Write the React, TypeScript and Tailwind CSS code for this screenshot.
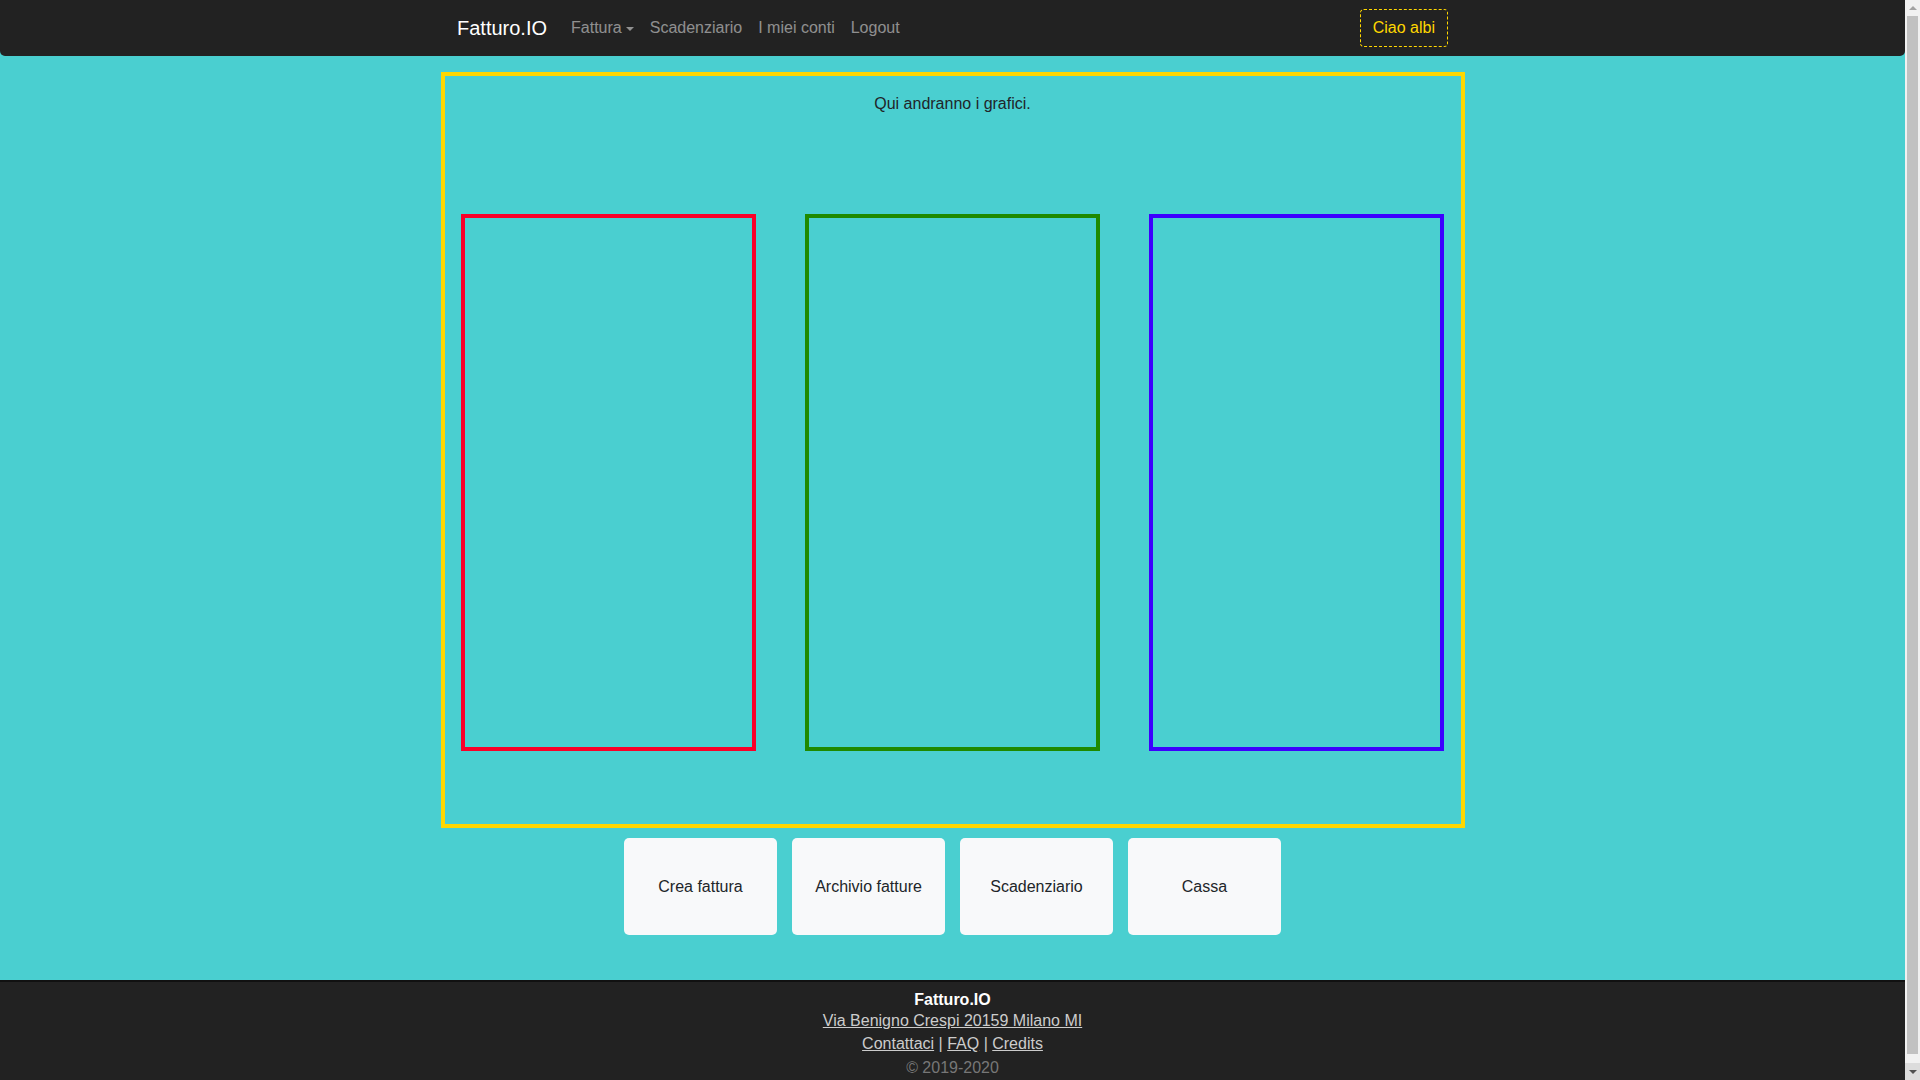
import React from 'react'

const boxes = [
  { id: 'red', className: 'border-[#fa0028]' },
  { id: 'green', className: 'border-[#1f8a00]' },
  { id: 'blue', className: 'border-[#3c00ff]' },
]

const actions = ['Crea fattura', 'Archivio fatture', 'Scadenziario', 'Cassa']

function Navbar() {
  return (
    <nav className="h-[56px] shrink-0 bg-[#222222] rounded-b-[5px] flex items-center">
      <div className="w-full flex items-center pl-[457px] pr-[457px]">
        <a className="text-[20px] leading-[30px] text-white mr-[16px]">Fatturo.IO</a>
        <ul className="flex items-center text-[16px] leading-6 text-white/50">
          <li className="px-[8px] flex items-center">
            Fattura
            <span className="inline-block w-0 h-0 ml-[4px] mt-[2px] border-t-[4.8px] border-x-[4.8px] border-x-transparent border-t-white/50" />
          </li>
          <li className="px-[8px]">Scadenziario</li>
          <li className="px-[8px]">I miei conti</li>
          <li className="px-[8px]">Logout</li>
        </ul>
        <button className="ml-auto h-[38px] px-[12px] border border-dashed border-[#ffd700] rounded-[4px] text-[#ffd700] text-[16px] leading-6">
          Ciao albi
        </button>
      </div>
    </nav>
  )
}

function Footer() {
  return (
    <footer className="mt-[45px] shrink-0 bg-[#222222] border-t-2 border-[#111111] pt-[6px] pb-4 text-center text-[16px] leading-6">
      <div className="font-bold text-white">Fatturo.IO</div>
      <div className="-mt-[3px]">
        <a className="text-[#cccccc] underline">Via Benigno Crespi 20159 Milano MI</a>
      </div>
      <div className="-mt-[1px] text-[#cccccc]">
        <a className="underline">Contattaci</a> | <a className="underline">FAQ</a> | <a className="underline">Credits</a>
      </div>
      <div className="text-[#777777]">© 2019-2020</div>
    </footer>
  )
}

// browser scrollbar, as seen in the screenshot
function Scrollbar() {
  return (
    <aside className="w-[15px] shrink-0 h-screen bg-[#f1f1f1] flex flex-col">
      <div className="h-[15px] flex items-center justify-center">
        <span className="w-0 h-0 border-b-[4px] border-x-[4px] border-x-transparent border-b-[#a3a3a3]" />
      </div>
      <div className="flex-1 px-[2px] pt-[1px] pb-[9px]">
        <div className="h-full bg-[#c1c1c1]" />
      </div>
      <div className="h-[17px] flex items-center justify-center bg-[#dcdcdc]">
        <span className="w-0 h-0 border-t-[4px] border-x-[4px] border-x-transparent border-t-[#505050]" />
      </div>
    </aside>
  )
}

export default function App() {
  return (
    <div className="h-screen flex overflow-hidden bg-[#4acfd0] font-['Liberation_Sans',Arial,sans-serif] text-[#212529]">
      <div className="flex-1 min-w-0 flex flex-col">
        <Navbar />

        <main className="flex flex-col items-center">
          {/* chart area placeholder */}
          <section className="mt-4 w-[1024px] h-[756px] border-4 border-[#ffd700] pt-4 px-4">
            <p className="text-center text-[16px] leading-6">Qui andranno i grafici.</p>
            <div className="mt-[98px] flex justify-between pr-[1px]">
              {boxes.map((b) => (
                <div key={b.id} className={`w-[295px] h-[537px] border-4 ${b.className}`} />
              ))}
            </div>
          </section>

          <div className="mt-[10px] flex gap-[15px]">
            {actions.map((label) => (
              <button
                key={label}
                className="w-[153px] h-[97px] bg-[#f8f9fa] rounded-[5px] flex items-center justify-center text-[16px] leading-6 text-[#212529]"
              >
                {label}
              </button>
            ))}
          </div>
        </main>

        <Footer />
      </div>
      <Scrollbar />
    </div>
  )
}
